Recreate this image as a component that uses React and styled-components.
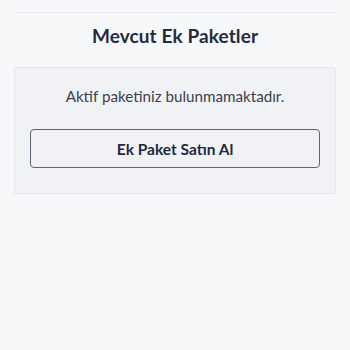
import styled, { createGlobalStyle } from 'styled-components';

const GlobalStyle = createGlobalStyle`
  html, body {
    margin: 0;
    padding: 0;
    background: #f7f8fa;
    font-family: 'Lato', 'Open Sans', sans-serif;
  }
`;

const Page = styled.div`
  padding: 12px 14px 0;
`;

const Section = styled.section`
  border-top: 1px solid #e6e8ed;
`;

const Title = styled.h2`
  margin: 0;
  padding: 11px 0 0;
  height: 40px;
  box-sizing: border-box;
  text-align: center;
  font-size: 19px;
  font-weight: 700;
  color: #252b3b;
  letter-spacing: 0.1px;
`;

const Card = styled.div`
  margin-top: 14px;
  background: #f1f2f5;
  border: 1px solid #e4e6eb;
  border-radius: 2px;
  padding: 18px 15px 25px;
  display: flex;
  flex-direction: column;
  align-items: center;
  gap: 23px;
`;

const Message = styled.p`
  margin: 0;
  font-size: 15.2px;
  color: #3b404b;
  line-height: 20px;
`;

const BuyButton = styled.button`
  width: 100%;
  height: 39px;
  background: transparent;
  border: 1.5px solid #5b6578;
  border-radius: 4px;
  font-family: inherit;
  font-size: 15.5px;
  font-weight: 700;
  color: #1f2a40;
  cursor: pointer;
`;

function App() {
  return (
    <>
      <GlobalStyle />
      <Page>
        <Section>
          <Title>Mevcut Ek Paketler</Title>
          <Card>
            <Message>Aktif paketiniz bulunmamaktadır.</Message>
            <BuyButton>Ek Paket Satın Al</BuyButton>
          </Card>
        </Section>
      </Page>
    </>
  );
}

export default App;
